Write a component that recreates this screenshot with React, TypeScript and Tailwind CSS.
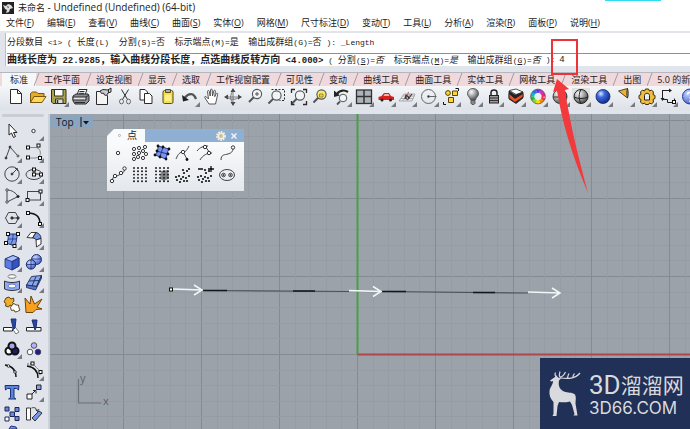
import React, { useState } from "react";

const SANS = "font-['Open_Sans','Noto_Sans_CJK_SC',sans-serif]";

const menus = [
  ["文件", "F"],
  ["编辑", "E"],
  ["查看", "V"],
  ["曲线", "C"],
  ["曲面", "S"],
  ["实体", "O"],
  ["网格", "M"],
  ["尺寸标注", "D"],
  ["变动", "T"],
  ["工具", "L"],
  ["分析", "A"],
  ["渲染", "R"],
  ["面板", "P"],
  ["说明", "H"],
];

const tabs = [
  "标准",
  "工作平面",
  "设定视图",
  "显示",
  "选取",
  "工作视窗配置",
  "可见性",
  "变动",
  "曲线工具",
  "曲面工具",
  "实体工具",
  "网格工具",
  "渲染工具",
  "出图",
  "5.0 的新",
];

const options = [
  { label: "分割", letter: "S", value: "否" },
  { label: "标示端点", letter: "M", value: "是" },
  { label: "输出成群组", letter: "G", value: "否" },
];

type ToolDef = { name: string; icon: React.ReactNode; flyout?: boolean };

const K = "#2b2b2b";

// small square control point
const Knot = ({ x, y }: { x: number; y: number }) => (
  <rect x={x - 1.5} y={y - 1.5} width="3" height="3" fill="#fff" stroke="#111" />
);

const Ring = ({ x, y, r = 1.7 }: { x: number; y: number; r?: number }) => (
  <circle cx={x} cy={y} r={r} fill="#fff" stroke="#222" strokeWidth="0.9" />
);

const Lens = ({ x, y, fill = "#f1f4f7" }: { x: number; y: number; fill?: string }) => (
  <g>
    <path d={`M${x - 3} ${y + 3}l-5 5`} stroke="#555" strokeWidth="2" />
    <circle cx={x} cy={y} r="4.6" fill={fill} stroke="#555" strokeWidth="1.1" />
  </g>
);

const wheel = ["#e33", "#f80", "#fd0", "#8d2", "#2b4", "#1bb", "#27e", "#63d", "#c3c", "#e27"];

const Dots = ({ shade }: { shade?: boolean }) => (
  <g fill="#111">
    {shade && <path d="M10 7l7-1 1 8-5 3-4-2z" fill="#555" opacity="0.7" />}
    {[0, 1, 2, 3, 4].map((r) =>
      [0, 1, 2, 3].map((c) => <circle key={`${r}${c}`} cx={5 + c * 4} cy={4 + r * 3.3} r="0.95" />)
    )}
  </g>
);

const Cloud = () => (
  <g fill="#111">
    {[
      [4, 13], [7, 12], [5, 16], [9, 15], [8, 18], [11, 13], [12, 17], [14, 14], [15, 17], [17, 12],
      [12, 9], [15, 7], [17, 5], [11, 6],
    ].map(([x, y]) => (
      <circle key={`${x}-${y}`} cx={x} cy={y} r="1.1" />
    ))}
  </g>
);

const topTools: ToolDef[] = [
  {
    name: "新建",
    icon: <path d="M5.5 3.5h7l4 4v10h-11zM12.5 3.5v4h4" fill="#fff" stroke={K} />,
  },
  {
    name: "打开",
    icon: (
      <g stroke="#6b4a00" strokeWidth="0.9">
        <path d="M3.5 16.5v-9l2-1.500h4l1.500 1.500h6v3" fill="#e9a92a" />
        <path d="M3.500 16.500l3.500-6h12l-4 6z" fill="#ffd75a" />
      </g>
    ),
  },
  {
    name: "保存",
    flyout: true,
    icon: (
      <g stroke="#33331c">
        <path d="M3.500 3.500h14.500v14h-13l-1.500-1.500z" fill="#a9a14d" />
        <path d="M6.500 3.500h8.500v6.500h-8.500z" fill="#fff" />
        <path d="M7.500 13h7.500v4.500h-7.500z" fill="#ddd" />
        <path d="M9.500 14v3" strokeWidth="1.500" />
      </g>
    ),
  },
  {
    name: "打印",
    icon: (
      <g stroke={K}>
        <path d="M7 9l2-5.500h8l-2 5.500z" fill="#fff" />
        <path d="M3 10l3-2h12l1 2v5l-3 3h-11l-2-3z" fill="#8b8f94" />
        <path d="M3 11h13v3h-13z" fill="#e2e4e6" />
        <path d="M9.500 5.500h5M9 7.300h5M16 11l3-2M5 16.500h10" />
      </g>
    ),
  },
  {
    name: "属性",
    icon: (
      <g stroke={K}>
        <path d="M4.500 5.500h7l4 4v9h-11z" fill="#f4f4f4" />
        <path d="M8 5l3-1.500 5 .5 3-2v4l-3 1-1.500 2.500-2-.5-1-2-2 .5z" fill="#ccc" />
        <path d="M16.500 3v4" />
      </g>
    ),
  },
  {
    name: "剪切",
    icon: (
      <g fill="none" stroke={K}>
        <path d="M7.500 3.500l6 10M14.500 3.500l-6 10" />
        <ellipse cx="7.500" cy="15.500" rx="2" ry="2.400" stroke="#666" />
        <ellipse cx="14.500" cy="15.500" rx="2" ry="2.400" stroke="#666" />
      </g>
    ),
  },
  {
    name: "复制",
    icon: (
      <g fill="#fff" stroke={K}>
        <path d="M5 3.500h5l2.500 2.500v8h-7.500z" />
        <path d="M9.500 7.500h5l2.500 2.500v7.500h-7.500z" />
      </g>
    ),
  },
  {
    name: "粘贴",
    icon: (
      <g stroke="#574d18">
        <rect x="6" y="4.500" width="10" height="13" rx="1.500" fill="#f5df4e" />
        <path d="M8.500 3.500h5v3h-5z" fill="#aaa" />
        <path d="M8 9h6v6h-6z" fill="#fbf08b" stroke="none" />
      </g>
    ),
  },
  {
    name: "撤销",
    flyout: true,
    icon: (
      <g>
        <path d="M6 11.500c4-5 9-4.500 11 1.500" fill="none" stroke="#555" strokeWidth="2.400" />
        <path d="M3 9l1 6.500 6-1.500z" fill="#222" />
      </g>
    ),
  },
  {
    name: "平移",
    icon: (
      <path
        d="M8 18l-4-6c-1-1.500.5-2 1.500-1l2 2-1-7.500c0-1.300 1.500-1.300 1.800 0l.9 4.500.3-6c.1-1.200 1.600-1.200 1.700 0l.3 6 1.300-5c.4-1.200 1.700-.9 1.600.2l-.7 5.500 1.500-3c.6-1 1.800-.5 1.500.6l-2.200 9.700z"
        fill="#fff"
        stroke="#444"
        strokeWidth="0.9"
      />
    ),
  },
  {
    name: "旋转视图",
    icon: (
      <g fill="none" stroke="#777">
        <path d="M5 11c2 3 10 3 12 0M11 5c-3 3-3 9 0 12" />
        <path d="M11 2l-2.500 4h5zM11 20l-2.500-4h5zM2 11l4-2.500v5zM20 11l-4-2.500v5z" fill="#444" stroke="none" />
        <path d="M11 5v12M5 11h12" stroke="#666" strokeWidth="0.800" />
      </g>
    ),
  },
  {
    name: "缩放",
    icon: (
      <g>
        <Lens x={13} y={8} />
        <path d="M11 8h4M13 6v4" stroke="#555" />
      </g>
    ),
  },
  {
    name: "框选缩放",
    icon: (
      <g>
        <path d="M5.500 3.500h13v11h-5" fill="none" stroke={K} strokeDasharray="2 1.500" />
        <Lens x={10.500} y={9.500} />
      </g>
    ),
  },
  {
    name: "缩放至全部",
    icon: (
      <g>
        <Lens x={12} y={9.500} />
        <path d="M3.500 7v-3.500h3.500M15 3.500h3.500v3.500M18.500 15v3.500h-3.500M3.500 15v3.500h3" fill="none" stroke={K} strokeWidth="1.300" />
      </g>
    ),
  },
  {
    name: "缩放至选取",
    icon: (
      <g>
        <Lens x={12.500} y={8.500} fill="#f4ea6c" />
        <path d="M10.500 8h3.500v3h-3.500z" fill="#ffd21c" stroke="#776" strokeWidth="0.8" />
      </g>
    ),
  },
  {
    name: "复原视图",
    flyout: true,
    icon: (
      <g>
        <path d="M6 8c3-4.500 8-4 11-2" fill="none" stroke="#222" strokeWidth="2.200" />
        <path d="M3 4.500v6.500l6-1.500z" fill="#222" />
        <path d="M9 15.500l-3 3" stroke="#555" strokeWidth="1.800" />
        <circle cx="12" cy="12" r="3.800" fill="#f1f4f7" stroke="#555" />
      </g>
    ),
  },
  {
    name: "四个视图",
    flyout: true,
    icon: (
      <g stroke="#333">
        <rect x="3.500" y="4" width="15" height="13.500" fill="#aeb3b9" strokeWidth="1.300" />
        <path d="M11 4v13.500M3.500 10.500h15" strokeWidth="1.500" />
      </g>
    ),
  },
  {
    name: "设定视图",
    flyout: true,
    icon: (
      <g>
        <path d="M3.500 11l3-1 2.500-3h5l2 3 3 1v3h-15.500z" fill="#d9201d" />
        <path d="M9.500 8h4l1 2h-6z" fill="#f3b5b0" />
        <circle cx="7" cy="14" r="1.500" fill="#222" />
        <circle cx="15.500" cy="14" r="1.500" fill="#222" />
      </g>
    ),
  },
  {
    name: "工作平面",
    flyout: true,
    icon: (
      <g fill="none" stroke="#999" strokeWidth="0.8">
        <path d="M3 15l5-7h11l-3 7zM5 12.500h12M6.500 10h12M7 15l4-7M11 15l3-7" />
        <path d="M9 13l1-4 3 3 3-4" stroke="#333" strokeWidth="1.100" />
        <circle cx="11.500" cy="12" r="1.500" stroke="#222" />
        <path d="M11 11l1.500-5" stroke="#b33" />
      </g>
    ),
  },
  {
    name: "物件锁点",
    flyout: true,
    icon: (
      <g fill="none" stroke="#666">
        <circle cx="10.500" cy="10.500" r="7" />
        <path d="M10.500 10.500h8" />
        <circle cx="10.500" cy="10.500" r="1" fill="#333" />
      </g>
    ),
  },
  {
    name: "选取",
    flyout: true,
    icon: (
      <g stroke="#5a4300">
        <circle cx="8" cy="7" r="2.400" fill="#ffd633" />
        <path d="M12.500 5h5v4.500h-5z" fill="#ffd633" />
        <path d="M8.500 11.500h5v5h-5z" fill="#ffd633" />
        <path d="M3.500 16v2.500h2.500M18.500 5v-2.500h-3" stroke="#111" fill="none" />
      </g>
    ),
  },
  {
    name: "隐藏",
    flyout: true,
    icon: (
      <g stroke="#555" strokeWidth="0.9">
        <path d="M11 2.500c-3.500 0-5.500 2.400-5.500 5.200 0 2.800 2.600 3.500 3 6.300h5c.4-2.800 3-3.500 3-6.300 0-2.800-2-5.200-5.500-5.200z" fill="url(#grayBall)" />
        <path d="M9 14.500h4v3l-1 1h-2l-1-1z" fill="#888" />
      </g>
    ),
  },
  {
    name: "锁定",
    flyout: true,
    icon: (
      <g stroke="#222">
        <path d="M8 10v-3.500c0-3.500 6-3.500 6 0v3.500" fill="none" strokeWidth="1.500" />
        <rect x="6.500" y="9.500" width="9" height="7.500" fill="#999" />
        <path d="M7 12h8M7 14.500h8" stroke="#333" />
      </g>
    ),
  },
  {
    name: "图层",
    flyout: true,
    icon: (
      <g stroke="#222" strokeWidth="0.8">
        <path d="M4 5l6 4 8-3v6l-7 5.500-7-4.500z" fill="#222" />
        <path d="M4.500 4.500l6.500 4 7-2.500-7-3z" fill="#fff" />
        <path d="M4 7.500l6 5 8-5v3.500l-8 5.500-6-4.500z" fill="#ef4f25" />
      </g>
    ),
  },
  {
    name: "颜色",
    flyout: true,
    icon: (
      <g fill="none" strokeWidth="3.600">
        {wheel.map((c, i) => (
          <circle key={c} cx="11" cy="10.500" r="5.500" stroke={c} pathLength={10} strokeDasharray="1.050 8.950" strokeDashoffset={-i} />
        ))}
        <circle cx="11" cy="10.500" r="7.400" stroke="#333" strokeWidth="0.600" />
      </g>
    ),
  },
  {
    name: "着色",
    flyout: true,
    icon: (
      <g>
        <circle cx="11" cy="10.500" r="7" fill="url(#grayBall)" stroke="#333" strokeWidth="0.900" />
        <path d="M4 11h14" stroke="#333" />
      </g>
    ),
  },
  {
    name: "着色模式",
    flyout: true,
    icon: (
      <g>
        <rect x="2" y="2" width="18" height="17" fill="#e2e2e2" />
        <circle cx="11" cy="10.500" r="7" fill="url(#grayBall)" stroke="#222" />
        <path d="M4 11c4 2 10 2 14 0M11 3.500c-2.500 4-2.500 10 0 14" fill="none" stroke="#222" />
      </g>
    ),
  },
  {
    name: "渲染",
    flyout: true,
    icon: <circle cx="11" cy="10.500" r="7" fill="url(#blueBall)" stroke="#13245f" strokeWidth="0.800" />,
  },
  {
    name: "聚光灯",
    flyout: true,
    icon: (
      <g stroke="#333" strokeWidth="0.900">
        <path d="M4.500 5l9-2.500v9.500z" fill="#f6b02c" />
        <path d="M13.500 2.500c1 3 1 7 0 9.500-1-3-1-7 0-9.500z" fill="#999" />
      </g>
    ),
  },
  {
    name: "选项",
    flyout: true,
    icon: (
      <g>
        <path
          d="M4.500 6l2-2 2 1 1-2h3l1 2 2-1 2 2-.5 2.500 2 1v3l-2 1 .5 2.500-2 2-2-1-1 1.500h-3l-1-1.500-2 1-2-2 .5-2.500-2-1v-3l2-1z"
          fill="#f1bd3f"
          stroke="#3d2d08"
        />
        <path d="M8.500 14v-4.500c0-3 5-3 5 0v4.500z" fill="#e9edf2" stroke="#222" />
      </g>
    ),
  },
  {
    name: "尺寸标注",
    flyout: true,
    icon: (
      <g fill="none" stroke="#222">
        <path d="M5.500 4v10M5.500 4.500h8M5.500 13.500h5M10.500 13.500v3h7v-4" />
        <path d="M12 2.500l3 2-3 2zM3.500 12h4l-2 3z" fill="#222" stroke="none" />
        <Knot x={17} y={16} />
      </g>
    ),
  },
  {
    name: "帮助",
    icon: (
      <g>
        <circle cx="11" cy="10.500" r="7.500" fill="url(#softBall)" stroke="#223a9a" />
        <path d="M8.500 8.500c0-3 5-3 5 0 0 2-2.500 2-2.500 4M11 14.500v1.500" fill="none" stroke="#fff" strokeWidth="1.500" />
      </g>
    ),
  },
];

const sideTools: ToolDef[] = [
  {
    name: "选取物件",
    icon: <path d="M8 4v11l2.500-2 2 4.500 2-1-2-4h3.500z" fill="#fff" stroke="#222" />,
  },
  { name: "点", flyout: true, icon: <Ring x={10.500} y={11} /> },
  {
    name: "多重直线",
    flyout: true,
    icon: (
      <g fill="none" stroke="#444">
        <path d="M5 16l4-11 8 9" />
        <circle cx="5" cy="16" r="1" fill="#111" />
        <circle cx="9" cy="5" r="1" fill="#111" />
        <circle cx="17" cy="14" r="1" fill="#fff" />
      </g>
    ),
  },
  {
    name: "控制点曲线",
    flyout: true,
    icon: (
      <g>
        <path d="M5 5.500h7c7 0 7 10 1 10.500h-8" fill="none" stroke="#888" />
        <Knot x={5} y={5.500} />
        <Knot x={15.500} y={3.500} />
        <Knot x={5} y={15.500} />
        <Knot x={17} y={16} />
      </g>
    ),
  },
  {
    name: "圆",
    flyout: true,
    icon: (
      <g fill="none" stroke="#444">
        <circle cx="11" cy="11" r="7.200" />
        <path d="M11 11l5-5" />
        <circle cx="11" cy="11" r="1" fill="#111" />
        <path d="M14 5.500h2.500v2.500" />
      </g>
    ),
  },
  {
    name: "椭圆",
    flyout: true,
    icon: (
      <g>
        <ellipse cx="11" cy="11.500" rx="8" ry="5" fill="none" stroke="#444" />
        <path d="M11 6v5h6" fill="none" stroke="#222" />
        <Knot x={11} y={6.500} />
        <Knot x={11} y={11.500} />
        <Knot x={18} y={11.500} />
      </g>
    ),
  },
  {
    name: "圆弧",
    flyout: true,
    icon: (
      <g fill="none" stroke="#444">
        <path d="M6 17v-12c5 0 9 3 11 6.500z" />
        <circle cx="6" cy="17" r="1.200" fill="#fff" />
        <circle cx="6" cy="5" r="1.200" fill="#fff" />
        <circle cx="17" cy="11.500" r="1.200" fill="#111" />
      </g>
    ),
  },
  {
    name: "矩形",
    flyout: true,
    icon: (
      <g>
        <rect x="4.500" y="6.500" width="13" height="8.500" fill="none" stroke="#444" />
        <Knot x={17.500} y={6.500} />
        <Knot x={4.500} y={15} />
      </g>
    ),
  },
  {
    name: "多边形",
    flyout: true,
    icon: (
      <g fill="none" stroke="#444">
        <path d="M7.500 5.500h7l3 5.500-3 5.500h-7l-3-5.500z" />
        <path d="M11 11h6" />
        <circle cx="11" cy="11" r="1.200" fill="#111" />
        <circle cx="17" cy="11" r="1.200" fill="#111" />
      </g>
    ),
  },
  {
    name: "曲线圆角",
    flyout: true,
    icon: (
      <g>
        <path d="M5 6c8 0 12 4 12 11" fill="none" stroke="#111" strokeWidth="1.500" />
        <Knot x={5} y={6} />
        <Knot x={17} y={17} />
      </g>
    ),
  },
  {
    name: "指定点建立曲面",
    flyout: true,
    icon: (
      <g>
        <path d="M7 5h10c-2 4-1 7-3 12l-9-3c3-3 2-6 2-9z" fill="#7c9be8" stroke="#1d2f7a" />
        <path d="M12 5c0 4 0 7-2.500 10.500M7 10h9" fill="none" stroke="#1d2f7a" strokeWidth="0.800" />
        <Knot x={7} y={5} />
        <Knot x={17} y={5} />
        <Knot x={5} y={14} />
        <Knot x={13.500} y={17} />
      </g>
    ),
  },
  {
    name: "挤出曲面",
    flyout: true,
    icon: (
      <g stroke="#222" strokeWidth="0.900">
        <path d="M4 8.500l4-5h5l-3.500 5.500z" fill="#fff" />
        <path d="M9.500 9l3.500-5.500c3 .5 5 3 5 6l-5 1.500c0-1-1.500-2-3.500-2z" fill="#7695ea" />
        <path d="M13 11l5-1.500v5.500l-4.500 3z" fill="#fff" />
      </g>
    ),
  },
  {
    name: "立方体",
    flyout: true,
    icon: (
      <g stroke="#1d2f7a" strokeWidth="0.800">
        <path d="M4 8l8-3.500 6 2.500v8l-7 4-7-3z" fill="#5b7be0" />
        <path d="M4 8l8-3.500 6 2.500-7 3.500z" fill="#a9bdf6" />
        <path d="M11 10.500l7-3.500v8l-7 4z" fill="#3654bd" />
      </g>
    ),
  },
  {
    name: "球体",
    flyout: true,
    icon: (
      <g stroke="#13245f" strokeWidth="0.900">
        <circle cx="13.500" cy="8.500" r="5" fill="url(#softBall)" />
        <circle cx="8" cy="13.500" r="4.700" fill="url(#softBall)" />
        <path d="M3.500 13.500h9M8 9v9M9 8h9" fill="none" strokeWidth="0.700" />
      </g>
    ),
  },
  {
    name: "曲面工具",
    flyout: true,
    icon: (
      <g stroke="#334">
        <ellipse cx="11" cy="4.500" rx="4" ry="1.800" fill="#fff" stroke="#777" />
        <path d="M3.500 9v8c5 2 10 2 15 0v-8c-4 2-11 2-15 0z" fill="#8fabee" />
        <ellipse cx="11" cy="14" rx="4" ry="2" fill="#fff" stroke="#5977cc" />
      </g>
    ),
  },
  {
    name: "网格平面",
    flyout: true,
    icon: (
      <g stroke="#1d2f5a" strokeWidth="0.900">
        <path d="M3.500 13l5-8.500 10-1-5 11z" fill="#8aa6ee" />
        <path d="M3.500 13v2.500l9 2.500 6-12v-2.500l-5 11z" fill="#5977cc" />
        <path d="M6 9l10-.5M9 14l4-9.500" fill="none" />
      </g>
    ),
  },
  {
    name: "布尔运算",
    icon: (
      <g stroke="#4b3509" strokeWidth="0.900">
        <path d="M5 4l3-1 2 2 2.500-1 .5 3-1.500 1.500 1.500 2-2 1.500-2-1-1.500 2-3-1 .5-2.500-2-1.500z" fill="#f2ad2b" />
        <path d="M11 11l2-1.500 2 1.500 2.500 0 .5 3 1 2-2.500 1.500-2.500.5-1-2-2.500.5-1-3z" fill="#fff" />
      </g>
    ),
  },
  {
    name: "炸开",
    icon: <path d="M2 4l5 6 1-8 3.500 8 7.500-5-5 8 5 2-6 .5-3 3h-7z" fill="#f6a01d" stroke="#5d3900" strokeWidth="0.900" />,
  },
  {
    name: "修剪",
    icon: (
      <g stroke="#222" fill="#fff">
        <path d="M2.500 11.500h9v3.500h-9z" />
        <path d="M11 12l3-1 4 5-3 2z" stroke="#777" />
        <path d="M10 3h5l-1 9-1.500 1.500z" fill="#29489c" stroke="#1d2f7a" />
      </g>
    ),
  },
  {
    name: "分割",
    icon: (
      <g stroke="#222" fill="#fff">
        <path d="M3.500 11.500h14.500v3.500h-14.500z" />
        <path d="M9 4h5l-1 8-1 2z" fill="#29489c" stroke="#1d2f7a" />
      </g>
    ),
  },
  {
    name: "群组",
    flyout: true,
    icon: (
      <g stroke="#111" strokeWidth="2">
        <circle cx="8" cy="13" r="3.500" fill="#fff" />
        <circle cx="14" cy="13" r="3.500" fill="#1f1d6b" />
        <circle cx="11" cy="8" r="3.500" fill="#a7a4e8" />
      </g>
    ),
  },
  {
    name: "解散群组",
    icon: (
      <g stroke="#445" strokeWidth="0.900">
        <circle cx="7" cy="14" r="2.800" fill="#fff" />
        <circle cx="15" cy="14" r="2.800" fill="#1f1d8b" />
        <circle cx="11" cy="7.500" r="2.800" fill="#b5b2f3" />
      </g>
    ),
  },
  {
    name: "曲线编辑",
    icon: (
      <g>
        <path d="M4 5c7 1 11 5 11 12" fill="none" stroke="#111" strokeWidth="1.400" />
        <Ring x={7.500} y={6} r={1.300} />
        <Ring x={14} y={12} r={1.300} />
      </g>
    ),
  },
  {
    name: "打开控制点",
    flyout: true,
    icon: (
      <g>
        <path d="M4 6c7 1 11 5 11 12" fill="none" stroke="#111" strokeWidth="1.400" />
        <path d="M4 4h6l7 7v5" fill="none" stroke="#666" strokeDasharray="2 1" />
        <Knot x={9.500} y={3.500} />
        <Knot x={17.500} y={12} />
      </g>
    ),
  },
  {
    name: "文字",
    icon: (
      <path d="M4 4.500h14l-.5 4.500-2-1.500h-2.500v9l2 1.500h-7.500l2-1.500v-9h-3l-2 1.500z" fill="#5b82dc" stroke="#1b3473" />
    ),
  },
  {
    name: "移动",
    flyout: true,
    icon: (
      <g>
        <path d="M4 13h5v5h-5z" fill="#fff" stroke="#222" />
        <path d="M13.500 4h4.500v4.500h-4.500z" fill="#8d9ff0" stroke="#222" />
        <path d="M9 13l4-4M10 9.500h3v3" fill="none" stroke="#222" />
      </g>
    ),
  },
  {
    name: "阵列",
    icon: (
      <g fill="#6b88e0" stroke="#1a2450">
        <path d="M4 4h4v4h-4z" />
        <path d="M14 4.500h4v4h-4z" />
        <path d="M9 9h4.500v4.500h-4.500z" />
        <path d="M4 14h4v4h-4z" fill="#fff" />
        <path d="M14 13.500h4v4h-4z" />
      </g>
    ),
  },
  {
    name: "旋转",
    icon: (
      <g stroke="#222" strokeWidth="0.900">
        <path d="M3.500 5h4v12h-4z" fill="#fff" />
        <path d="M9 15l7-7 3 2-7 8z" fill="#7695ea" />
        <path d="M8.500 5c3-1 5 0 6 3M12.500 6.500l2 2 1.500-2.500" fill="none" />
      </g>
    ),
  },
];

const pointTools: ToolDef[] = [
  { name: "单点", icon: <Ring x={11} y={11} /> },
  {
    name: "多点",
    icon: (
      <g>
        {[
          [5, 7], [10, 6], [16, 5], [5, 12], [10, 11], [14, 9], [17, 12], [5, 17], [9, 15], [14, 16],
        ].map(([x, y]) => (
          <Ring key={`${x}-${y}`} x={x} y={y} r={1.600} />
        ))}
      </g>
    ),
  },
  {
    name: "抽离点",
    icon: (
      <g>
        <path d="M7 4l11 3c-2 3-2 6-3 10l-11-4c3-3 3-6 3-9z" fill="#7d94ec" stroke="#26358a" />
        <path d="M12 5l-3 10M5 9l12 3" stroke="#26358a" />
        <g fill="#111">
          {[
            [7, 4], [12, 5], [18, 7], [17, 12], [15, 17], [9, 15], [4, 13], [6, 9],
          ].map(([x, y]) => (
            <circle key={`${x}-${y}`} cx={x} cy={y} r="1.400" />
          ))}
        </g>
      </g>
    ),
  },
  {
    name: "最接近点",
    icon: (
      <g>
        <path d="M4 17c2-5 4-7 7-7s4-2 6-6M11 10l4 7" fill="none" stroke="#444" />
        <Ring x={11} y={10} />
        <circle cx="15" cy="17.500" r="1.400" fill="#111" />
      </g>
    ),
  },
  {
    name: "物件间最接近点",
    icon: (
      <g>
        <path d="M3 9c3-4 7-5 11-5M11 4l5 7M6 18c3-5 7-7 12-7" fill="none" stroke="#444" />
        <Ring x={11} y={5} />
        <Ring x={15} y={11} />
      </g>
    ),
  },
  {
    name: "曲线端点",
    icon: (
      <g>
        <path d="M5 18c0-6 4-5 7-6s5-2 5-6" fill="none" stroke="#444" />
        <Ring x={17} y={5.500} />
      </g>
    ),
  },
  {
    name: "曲线分段",
    icon: (
      <g>
        <path d="M5 17c1-6 4-4 7-6s5-1 6-7" fill="none" stroke="#444" />
        <Ring x={5} y={17} />
        <Ring x={8} y={12} />
        <Ring x={14} y={9} />
        <Ring x={17.500} y={4.500} />
      </g>
    ),
  },
  { name: "点格", icon: <Dots /> },
  { name: "立体点格", icon: <Dots shade /> },
  { name: "点云", icon: <Cloud /> },
  {
    name: "编辑点云",
    icon: (
      <g>
        <Cloud />
        <path d="M4 5h5M14 5h6M17 2v6" stroke="#111" strokeWidth="1.300" />
      </g>
    ),
  },
  {
    name: "可展开点",
    icon: (
      <g fill="none" stroke="#444">
        <ellipse cx="11" cy="11" rx="7.500" ry="5.500" />
        <circle cx="7.500" cy="11" r="1.800" />
        <circle cx="14.500" cy="11" r="1.800" />
        <circle cx="7.500" cy="11" r=".6" fill="#111" />
        <circle cx="14.500" cy="11" r=".6" fill="#111" />
      </g>
    ),
  },
];

const Tool = ({ tool }: { tool: ToolDef }) => (
  <button type="button" aria-label={tool.name} className="flex min-h-0 items-center justify-center">
    <svg viewBox="0 0 22 22" className="size-[22px] shrink-0" strokeWidth="1">
      {tool.icon}
      {tool.flyout && <path d="M21 16v5h-5z" fill="#777b80" />}
    </svg>
  </button>
);

// Chinese glyphs are set one step larger than the monospaced latin around them
const Prompt = ({ text, bold }: { text: string; bold?: boolean }) => (
  <span className={bold ? "text-[9px] font-bold" : "text-[8px]"}>
    {text.split(/([\u4e00-\u9fff，]+)/).map((part, i) =>
      i % 2 ? (
        <span key={i} className={bold ? "text-[10px]" : "text-[9px]"}>
          {part}
        </span>
      ) : (
        part
      )
    )}
  </span>
);

const Arrow = ({ x, y, from }: { x: number; y: number; from: number }) => (
  <path d={`M${from} ${y - 1}L${x} ${y}M${x - 8} ${y - 5}l8 5l-8 5`} fill="none" stroke="#f3f6f6" strokeWidth="1.500" />
);

const Grid = () => {
  const ox = 357.5;
  const oy = 354.5;
  const lines = [];
  for (let i = -60; i <= 60; i++) {
    const d = Math.round(i * 15.6);
    const color = i % 5 === 0 ? "#848b93" : "#959ca4";
    lines.push(<path key={i} d={`M${ox + d} 0v2000M-600 ${oy + d}h3000`} stroke={color} />);
  }
  return (
    <g fill="none">
      {lines}
      <path d={`M${ox} 0v${oy}`} stroke="#46a044" strokeWidth="2" />
      <path d={`M${ox} ${oy}h2000`} stroke="#b0474b" strokeWidth="2" />
    </g>
  );
};

const App: React.FC = () => {
  const [tab, setTab] = useState<string>("标准");
  const [value, setValue] = useState<string>("4");

  return (
    <div className={`relative flex h-screen flex-col overflow-hidden bg-[#e1e5eb] text-[#222] ${SANS}`}>
      <svg className="absolute size-0" aria-hidden="true">
        <defs>
          <radialGradient id="grayBall" cx="0.35" cy="0.3" r="0.75">
            <stop offset="0" stopColor="#fff" />
            <stop offset="0.5" stopColor="#a4a4a4" />
            <stop offset="1" stopColor="#444" />
          </radialGradient>
          <radialGradient id="blueBall" cx="0.35" cy="0.3" r="0.75">
            <stop offset="0" stopColor="#dfe9ff" />
            <stop offset="0.35" stopColor="#3f6be0" />
            <stop offset="1" stopColor="#0f2584" />
          </radialGradient>
          <radialGradient id="softBall" cx="0.35" cy="0.3" r="0.8">
            <stop offset="0" stopColor="#c8d6ff" />
            <stop offset="1" stopColor="#3857c6" />
          </radialGradient>
        </defs>
      </svg>

      {/* Title bar */}
      <header className="flex h-[15px] shrink-0 items-center gap-1 bg-white pl-[2px]">
        <svg viewBox="0 0 12 12" className="size-3">
          <path d="M0 0h12v12h-12z" fill="#222" />
          <path d="M1 3l3 1 2-2 3 1 2 3-3 1-1 3-3 1 1-3-2-1z" fill="#ddd" />
          <path d="M5 4l2 1-1 1z" fill="#222" />
        </svg>
        <h1 className="text-[10px] leading-[15px]">
          <span className="text-[9px]">未命名</span> - Undefined (Undefined) (64-bit)
        </h1>
      </header>
      <div className="absolute top-0 left-[605px] h-px w-14 bg-[#2fdcf2] shadow-sm" />

      {/* Menu */}
      <nav className="flex h-[18px] shrink-0 items-center gap-[13px] border-b-2 border-[#e3e5ea] bg-white pl-[6px]">
        {menus.map(([label, key]) => (
          <button key={label} type="button" className="shrink-0 text-[9px] leading-4">
            {label}(<u>{key}</u>)
          </button>
        ))}
      </nav>

      {/* Command area */}
      <div className="ml-[5px] shrink-0 border-l border-[#b9bdc4] bg-white pl-px font-['Liberation_Mono','Noto_Sans_CJK_SC',monospace] whitespace-pre">
        <p className="flex h-5 items-center leading-4">
          <Prompt text="分段数目 <1> ( 长度(L)  分割(S)=否  标示端点(M)=是  输出成群组(G)=否 ): _Length" />
        </p>
        <div className="flex h-[13px] items-center border-t border-[#8d9094] leading-3">
          <label htmlFor="command" className="shrink-0">
            <Prompt bold text="曲线长度为 22.9285，输入曲线分段长度，点选曲线反转方向 <4.000>" />
            <Prompt text=" (" />
          </label>
          {options.map((o, i) => (
            <button key={o.letter} type="button" className="shrink-0">
              <Prompt text={(i ? "  " : " ") + o.label + "("} />
              <u className="text-[8px]">{o.letter}</u>
              <Prompt text=")=" />
              <i className="text-[9px]">{o.value}</i>
            </button>
          ))}
          <Prompt text=" ):" />
          <input
            id="command"
            value={value}
            onChange={(e) => setValue(e.target.value)}
            className="min-w-0 flex-1 pl-1 text-[9px] leading-3 outline-none"
          />
        </div>
      </div>

      {/* Toolbar tabs */}
      <div className="mt-[6px] flex h-[14px] shrink-0 overflow-hidden border-t border-[#b4b8be] bg-[#efd9dc] pl-[2px]" role="tablist">
        {tabs.map((t) => (
          <button
            key={t}
            type="button"
            role="tab"
            aria-selected={t === tab}
            onClick={() => setTab(t)}
            className={`relative shrink-0 pl-2 text-[9px] leading-[13px] whitespace-nowrap not-last:pr-2 ${
              t === tab ? "bg-[#f5f7f9]" : ""
            }`}
          >
            {t}
            <svg viewBox="0 0 6 13" className="absolute top-0 -right-1 h-[13px] w-[6px]">
              <path d="M0 13L5 0" stroke="#a79a9e" />
            </svg>
          </button>
        ))}
      </div>
      <div className="shrink-0 overflow-hidden bg-linear-to-b from-[#f4f6f8] to-[#dde1e8] pb-[2px] pl-[5px]">
        <div className="-mr-[11px] grid h-[22px] grid-cols-[repeat(32,minmax(0,1fr))]">
          {topTools.map((tool) => (
            <Tool key={tool.name} tool={tool} />
          ))}
        </div>
      </div>

      <div className="flex min-h-0 flex-1 pt-1">
        {/* Side tools */}
        <aside className="flex w-[50px] shrink-0 flex-col border-r-2 border-[#cdd2d9] pl-px">
          <div className="mr-1 ml-px h-[3px] shrink-0 rounded-xs bg-[#c9cdd5]" />
          <div className="mt-[3px] grid max-h-[308px] min-h-0 w-11 flex-1 grid-cols-2 grid-rows-[repeat(14,minmax(0,1fr))]">
            {sideTools.map((tool) => (
              <Tool key={tool.name} tool={tool} />
            ))}
          </div>
          <svg viewBox="0 0 44 4" className="h-1 w-11 shrink-0">
            <path d="M8 4l2-3 5 1 1 2z" fill="#7695ea" stroke="#1d2f7a" />
          </svg>
        </aside>

        {/* Viewport */}
        <main className="relative min-w-0 flex-1 overflow-hidden bg-[#9ba2aa]">
          <svg className="absolute inset-0 size-full">
            <g transform="translate(-50 -114)">
              <Grid />
              <path d="M203 290.500L349 291.500M382 291.500L528 293" stroke="#4b525b" strokeWidth="1.200" />
              <path d="M203 290.500h24M293 291h22M382 291.500h24M473 292.500h22" stroke="#111622" strokeWidth="1.300" />
              <Arrow from={173} x={202} y={290} />
              <Arrow from={349} x={381} y={291.500} />
              <Arrow from={528} x={560} y={293} />
              <Knot x={171} y={289.500} />
              <path d="M78.500 379v24h23" fill="none" stroke="#6c7177" strokeWidth="1.200" />
              <text x="80" y="382" fontSize="11" fill="#5d6267">
                y
              </text>
              <text x="103" y="405" fontSize="11" fill="#5d6267">
                x
              </text>
            </g>
          </svg>

          <button
            type="button"
            className="relative mt-[2px] flex h-3 items-center gap-[6px] bg-[#8ba5bf] pr-1 pl-[6px] text-[10px] leading-3 text-[#10161e]"
          >
            Top
            <svg viewBox="0 0 9 10" className="h-[10px] w-[9px]">
              <path d="M1 0v10" stroke="#10161e" />
              <path d="M3 4h6l-3 3.500z" fill="#10161e" />
            </svg>
          </button>

          {/* Floating point palette */}
          <section className="absolute top-[15px] left-[57px] w-[137px]">
            <div className="flex h-[13px] items-center bg-[#8fb0d2] pr-[6px]">
              <svg viewBox="0 0 10 13" className="h-[13px] w-[10px]">
                <path d="M0 0h7l-7 7z" fill="#9ba2aa" />
                <path d="M7 0h3v13h-10v-6z" fill="#f8fafb" />
              </svg>
              <h2 className="flex h-full w-7 items-center gap-[6px] bg-[#f8fafb] pl-px text-[10px] leading-[13px]">
                <span className="size-[3px] rounded-full border border-[#aaa]" />
                点
              </h2>
              <button type="button" aria-label="选项" className="mr-1 ml-auto">
                <svg viewBox="0 0 10 10" className="size-[10px]">
                  <circle cx="5" cy="5" r="4" fill="none" stroke="#f2ead8" strokeWidth="2" strokeDasharray="1.600 1" />
                  <circle cx="5" cy="5" r="2.700" fill="#c9bd9c" stroke="#f6efdf" strokeWidth="1.600" />
                </svg>
              </button>
              <button type="button" aria-label="关闭">
                <svg viewBox="0 0 8 8" className="size-2">
                  <path d="M1.500 1.500l5 5M6.500 1.500l-5 5" stroke="#eef4fa" strokeWidth="1.500" />
                </svg>
              </button>
            </div>
            <div className="grid grid-cols-6 bg-linear-to-b from-[#fafbfc] to-[#e4e8ed] pr-[6px] pb-[5px]">
              {pointTools.map((tool) => (
                <Tool key={tool.name} tool={tool} />
              ))}
            </div>
          </section>

          {/* Watermark */}
          <div className="absolute right-0 bottom-0 flex h-[71px] w-[150px] items-center gap-[5px] bg-[#213056] pl-2 text-[#d9dadd]">
            <svg viewBox="0 0 36 46" className="h-[46px] w-9 shrink-0">
              <path
                d="M2 9.500l5-3.500 1-2 2 2.500 3 1-2 2c-1 6 1 9 5 11 4 1.500 8 .5 11 3 1.500 3 .5 6 .5 9l2 12h-4l1-1.500-2.500-9-2-3.500c-4 1-8 1-11 .5l-1.500 4-1 10h-4l1-2v-12c-3-3-4.500-7-4-11 .5-4 3.500-6 3.500-10l-2 .5z"
                fill="#d9dadd"
              />
              <path
                d="M9 6c-2-1-2.500-2.500-1.500-4.500M12 6.500c-1-2-1-3.500 0-6M12 6c3 0 4-2 5.500-5M12 7c8 1 15 1 20-5M20 7.500c-1-2 0-3 1-5M25 6.500c-.5-1.500.5-2.500 1.500-4"
                fill="none"
                stroke="#d9dadd"
                strokeWidth="1.200"
              />
            </svg>
            <div className="shrink-0 whitespace-nowrap">
              <p className="flex h-6 items-center leading-6">
                <span className="font-[Roboto,sans-serif] text-[26px]">3D</span>
                <span className="text-[21px]">溜溜网</span>
              </p>
              <p className="mt-1 font-[Inter,sans-serif] text-[17px] leading-[14px]">3D66.COM</p>
            </div>
          </div>
        </main>
      </div>

      {/* Red callout over the command value */}
      <svg className="pointer-events-none absolute top-[37px] left-[548px] h-[158px] w-11" viewBox="0 0 44 158">
        <rect x="4" y="3" width="25" height="34" fill="none" stroke="#ee3338" strokeWidth="2" />
        <path d="M9 42l-4 13 4-1c5 30 14 62 31 102-9-34-17-64-23-103l4-1z" fill="#f23a3c" />
      </svg>
    </div>
  );
};

export default App;
